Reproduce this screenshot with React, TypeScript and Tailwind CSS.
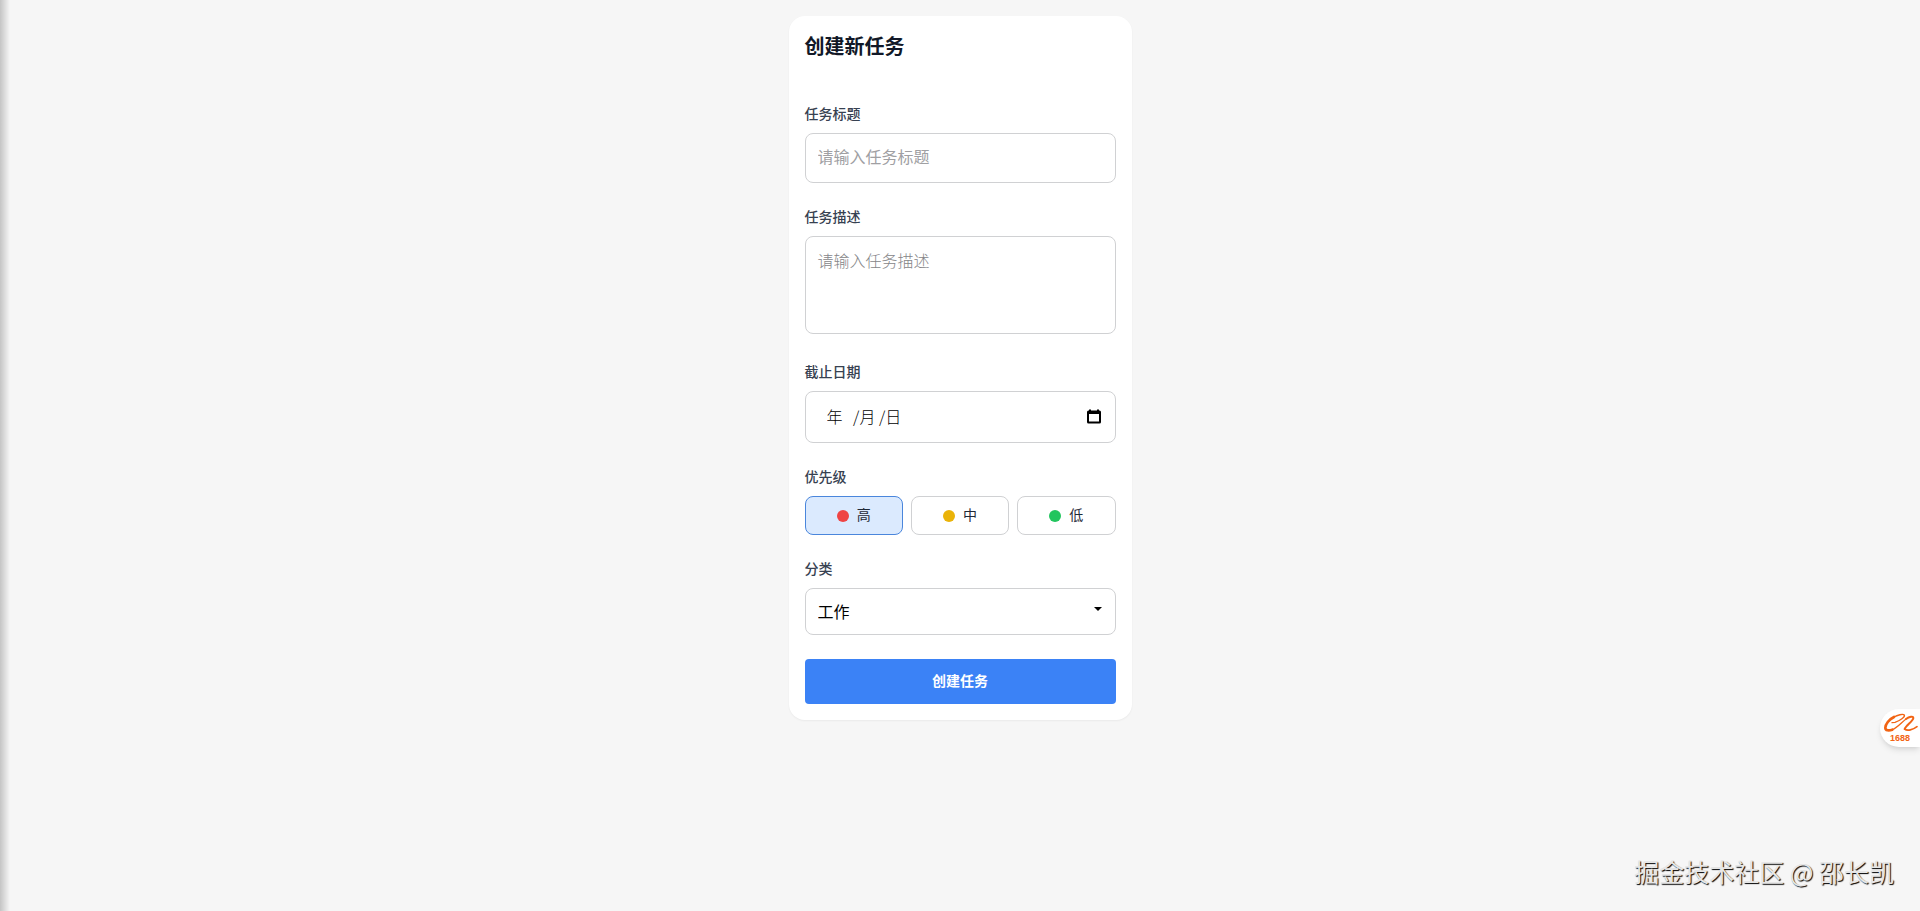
import { useState } from "react";
import type { ReactNode } from "react";

const PRIORITIES = [
  { id: "high", label: "高", dot: "bg-[#ef4444]" },
  { id: "medium", label: "中", dot: "bg-[#eab308]" },
  { id: "low", label: "低", dot: "bg-[#22c55e]" },
];

const CATEGORIES = ["工作", "学习", "生活", "其他"];

const FIELD = "block w-full rounded-lg border border-[#d0d1d3] bg-white px-3 text-base text-black focus:outline-none focus:border-[#3b82f6]";
const LABEL = "mb-2.5 block text-sm leading-[19px] font-medium text-[#374151]";

function Label({ htmlFor, children }: { htmlFor: string; children: ReactNode }) {
  return <label htmlFor={htmlFor} className={LABEL}>{children}</label>;
}

function CalendarIcon() {
  return (
    <svg viewBox="0 0 16 16" className="h-4 w-4">
      <path fill="#000" fillRule="evenodd" d="M3 .5h2v1h6v-1h2v1h.5A1.500 1.500 0 0 1 15 3V13A1.500 1.500 0 0 1 13.500 14.500h-11A1.500 1.500 0 0 1 1 13V3A1.500 1.500 0 0 1 2.500 1.500H3zM3 5V12.500h10V5z" />
    </svg>
  );
}

export default function App() {
  const [title, setTitle] = useState("");
  const [description, setDescription] = useState("");
  const [dueDate, setDueDate] = useState("");
  const [priority, setPriority] = useState("high");
  const [category, setCategory] = useState("工作");

  return (
    <div className="relative min-h-screen overflow-hidden bg-[#f6f6f6] py-4 font-['Noto_Sans_CJK_SC',sans-serif]">
      <div className="pointer-events-none absolute inset-y-0 left-0 w-2.5 bg-linear-to-r from-black/20 to-transparent" />

      <main className="mx-auto w-full max-w-[343px] rounded-2xl bg-white p-4 shadow-xs">
        <h1 className="text-xl leading-7 font-bold text-[#111827]">创建新任务</h1>

        <form className="mt-11" onSubmit={(e) => e.preventDefault()}>
          <div className="mb-6">
            <Label htmlFor="title">任务标题</Label>
            <input id="title" type="text" value={title} onChange={(e) => setTitle(e.target.value)} placeholder="请输入任务标题" className={`${FIELD} h-[50px] pb-1 placeholder:text-[#a0a0a3]`} />
          </div>

          <div className="mb-7">
            <Label htmlFor="description">任务描述</Label>
            <textarea id="description" value={description} onChange={(e) => setDescription(e.target.value)} placeholder="请输入任务描述" className={`${FIELD} h-[98px] resize-none py-[11px] font-light placeholder:text-[#858588]`} />
          </div>

          <div className="mb-6">
            <Label htmlFor="due">截止日期</Label>
            <div className="flex h-[52px] items-center rounded-lg border border-[#d0d1d3] pr-[13px] pl-[21px] focus-within:border-[#3b82f6]">
              <input id="due" type="text" value={dueDate} onChange={(e) => setDueDate(e.target.value)} placeholder="年   /月 /日" className="min-w-0 flex-1 pb-0.5 text-base font-light text-black placeholder:text-black focus:outline-none" />
              <button type="button" aria-label="选择日期">
                <CalendarIcon />
              </button>
            </div>
          </div>

          <div className="mb-6" role="group" aria-labelledby="priority-label">
            <div id="priority-label" className={LABEL}>优先级</div>
            <div className="grid grid-cols-3 gap-2">
              {PRIORITIES.map((p) => (
                <button
                  key={p.id}
                  type="button"
                  aria-pressed={priority === p.id}
                  onClick={() => setPriority(p.id)}
                  className={`flex h-[39px] items-center justify-center gap-2 rounded-lg border text-sm text-[#1f2937] ${priority === p.id ? "border-[#4a86dc] bg-[#dbeafe]" : "border-[#d0d1d3] bg-white"}`}
                >
                  <span className={`h-3 w-3 rounded-full ${p.dot}`} />
                  <span className="pb-1">{p.label}</span>
                </button>
              ))}
            </div>
          </div>

          <div className="mb-6">
            <Label htmlFor="category">分类</Label>
            <div className="relative">
              <select id="category" value={category} onChange={(e) => setCategory(e.target.value)} className={`${FIELD} h-[47px] appearance-none pb-0.5`}>
                {CATEGORIES.map((c) => <option key={c}>{c}</option>)}
              </select>
              <svg viewBox="0 0 8 4" className="pointer-events-none absolute top-[19px] right-3.5 h-1 w-2">
                <path d="M0 0h8L4 4z" />
              </svg>
            </div>
          </div>

          <button type="submit" className="block h-[45px] w-full rounded bg-[#3b82f6] pb-1 text-sm font-bold text-white hover:bg-[#2563eb]">
            创建任务
          </button>
        </form>
      </main>

      <a href="#1688" aria-label="1688" className="absolute top-[709px] right-0 flex h-[38px] w-10 flex-col items-start rounded-l-full bg-white pt-1 pl-1 shadow-md">
        <svg viewBox="0 0 102 60" className="h-5 w-[34px]" fill="none" stroke="#f26414" strokeLinecap="round" strokeLinejoin="round">
          <path strokeWidth="8" d="M30 12C15 19 4 34 4 44C4 53 14 54 25 50" />
          <path strokeWidth="4" d="M30 12C40 6 57 2 61 6C64 12 48 23 33 28L24 29" />
          <path strokeWidth="4" d="M25 50C39 45 52 29 66 18" />
          <path strokeWidth="6" d="M66 18C76 10 88 9 88 15C88 24 66 37 62 48" />
          <path strokeWidth="5" d="M62 48C70 55 87 50 99 41" />
        </svg>
        <span className="pl-1.5 font-['Liberation_Sans_Narrow',sans-serif] text-[9px] leading-[11px] font-bold text-[#f26414]">1688</span>
      </a>

      <p className="absolute right-[26px] bottom-[22px] text-[25px] leading-9 whitespace-nowrap text-[#e6e6e6] [text-shadow:1px_1px_1px_#000]">
        掘金技术社区 @ 邵长凯
      </p>
    </div>
  );
}
